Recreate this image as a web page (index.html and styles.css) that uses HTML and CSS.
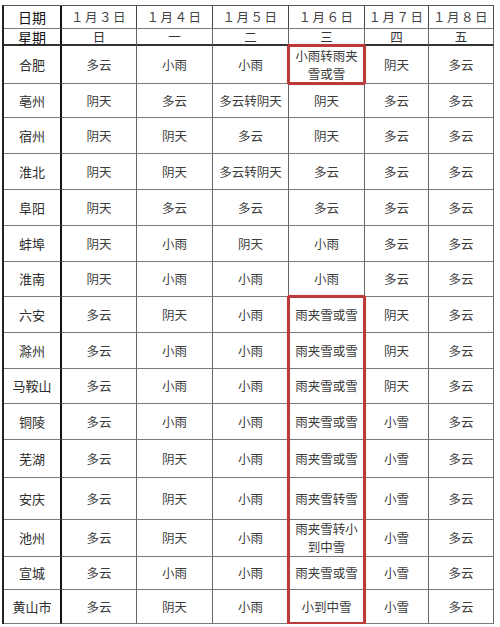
FILE: index.html
```html
<!DOCTYPE html>
<html lang="zh-CN">
<head>
<meta charset="utf-8">
<title>安徽天气预报</title>
<link rel="stylesheet" href="styles.css">
</head>
<body>
<div class="sheet">
  <div class="c city head">日期</div><div class="c date">１月３日</div><div class="c date">１月４日</div><div class="c date">１月５日</div><div class="c date">１月６日</div><div class="c date">１月７日</div><div class="c date">１月８日</div>
  <div class="c city head wkrow">星期</div><div class="c wk wkrow">日</div><div class="c wk wkrow">一</div><div class="c wk wkrow">二</div><div class="c wk wkrow">三</div><div class="c wk wkrow">四</div><div class="c wk wkrow">五</div>

  <div class="c city">合肥</div><div class="c">多云</div><div class="c">小雨</div><div class="c">小雨</div><div class="c two">小雨转雨夹<br>雪或雪</div><div class="c">阴天</div><div class="c">多云</div>
  <div class="c city">亳州</div><div class="c">阴天</div><div class="c">多云</div><div class="c">多云转阴天</div><div class="c">阴天</div><div class="c">多云</div><div class="c">多云</div>
  <div class="c city">宿州</div><div class="c">阴天</div><div class="c">阴天</div><div class="c">多云</div><div class="c">阴天</div><div class="c">多云</div><div class="c">多云</div>
  <div class="c city">淮北</div><div class="c">阴天</div><div class="c">阴天</div><div class="c">多云转阴天</div><div class="c">多云</div><div class="c">多云</div><div class="c">多云</div>
  <div class="c city">阜阳</div><div class="c">阴天</div><div class="c">多云</div><div class="c">多云</div><div class="c">多云</div><div class="c">多云</div><div class="c">多云</div>
  <div class="c city">蚌埠</div><div class="c">阴天</div><div class="c">小雨</div><div class="c">阴天</div><div class="c">小雨</div><div class="c">多云</div><div class="c">多云</div>
  <div class="c city">淮南</div><div class="c">阴天</div><div class="c">小雨</div><div class="c">小雨</div><div class="c">小雨</div><div class="c">多云</div><div class="c">多云</div>
  <div class="c city">六安</div><div class="c">多云</div><div class="c">阴天</div><div class="c">小雨</div><div class="c">雨夹雪或雪</div><div class="c">阴天</div><div class="c">多云</div>
  <div class="c city">滁州</div><div class="c">多云</div><div class="c">小雨</div><div class="c">小雨</div><div class="c">雨夹雪或雪</div><div class="c">阴天</div><div class="c">多云</div>
  <div class="c city">马鞍山</div><div class="c">多云</div><div class="c">小雨</div><div class="c">小雨</div><div class="c">雨夹雪或雪</div><div class="c">阴天</div><div class="c">多云</div>
  <div class="c city">铜陵</div><div class="c">多云</div><div class="c">小雨</div><div class="c">小雨</div><div class="c">雨夹雪或雪</div><div class="c">小雪</div><div class="c">多云</div>
  <div class="c city">芜湖</div><div class="c">多云</div><div class="c">阴天</div><div class="c">小雨</div><div class="c">雨夹雪或雪</div><div class="c">小雪</div><div class="c">多云</div>
  <div class="c city">安庆</div><div class="c">多云</div><div class="c">阴天</div><div class="c">小雨</div><div class="c">雨夹雪转雪</div><div class="c">小雪</div><div class="c">多云</div>
  <div class="c city">池州</div><div class="c">多云</div><div class="c">阴天</div><div class="c">小雨</div><div class="c two">雨夹雪转小<br>到中雪</div><div class="c">小雪</div><div class="c">多云</div>
  <div class="c city">宣城</div><div class="c">多云</div><div class="c">小雨</div><div class="c">小雨</div><div class="c">雨夹雪或雪</div><div class="c">小雪</div><div class="c">多云</div>
  <div class="c city">黄山市</div><div class="c">多云</div><div class="c">阴天</div><div class="c">小雨</div><div class="c">小到中雪</div><div class="c">小雪</div><div class="c">多云</div>

  <div class="mark mark-one"></div>
  <div class="mark mark-block"></div>
</div>
</body>
</html>
```

FILE: styles.css
```css
html, body {
  margin: 0;
  padding: 0;
  background: #ffffff;
}

body {
  font-family: "Noto Sans CJK SC", "Noto Sans", sans-serif;
  color: #3c3c3c;
}

.sheet {
  position: relative;
  display: grid;
  grid-template-columns: 58px 75px 76px 76px 76px 64px 65px;
  grid-template-rows: 23px 17px 38px 34px 36px 36px 36px 36px 35px 36px 36px 35px 36px 38px 42px 37px 33px 34px;
  width: max-content;
  margin: 5px 0 0 2px;
  border-top: 1px solid #555;
  border-left: 2px solid #222;
}

.c {
  box-sizing: border-box;
  display: flex;
  align-items: center;
  justify-content: center;
  text-align: center;
  border-right: 1px solid #666;
  border-bottom: 1px solid #7a7a7a;
  font-size: 12.5px;
  line-height: 18px;
  white-space: nowrap;
}

.city {
  border-right: 2px solid #111;
  color: #2e2e2e;
  font-size: 13px;
}

.head {
  color: #111;
  font-size: 14px;
}

.date {
  font-size: 12.5px;
  letter-spacing: 1.5px;
  color: #444;
  border-right-color: #444;
}

.wk {
  font-size: 12.5px;
  color: #333;
}

.wkrow {
  border-bottom: 2px solid #333;
  line-height: 14px;
}

.two {
  line-height: 18px;
}

.mark {
  position: absolute;
  box-sizing: border-box;
  border: 3px solid #bd3a3a;
  border-radius: 3px;
  box-shadow: 0 0 1px rgba(189, 58, 58, 0.6);
  pointer-events: none;
}

.mark-one {
  grid-column: 5 / 6;
  grid-row: 3 / 4;
  inset: -2px -1px -1px -2px;
}

.mark-block {
  grid-column: 5 / 6;
  grid-row: 10 / 19;
  inset: -2px -1px -1px -2px;
}
```
